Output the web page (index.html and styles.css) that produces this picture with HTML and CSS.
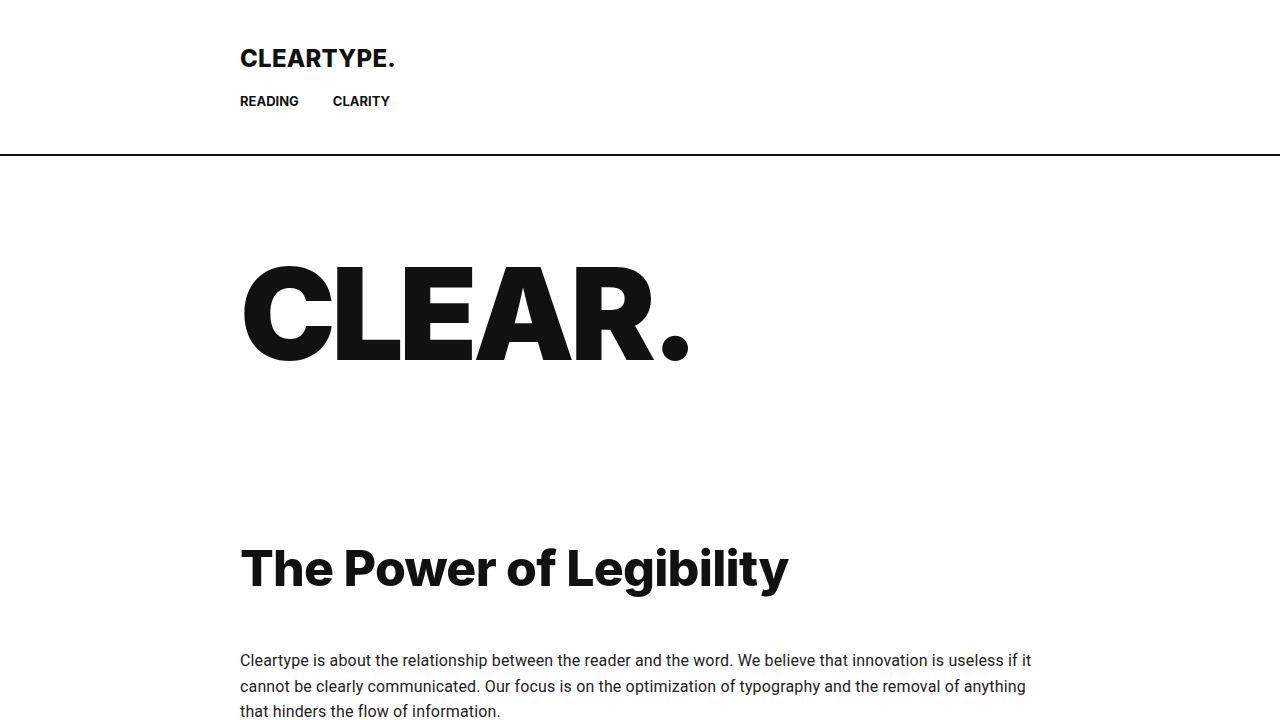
FILE: index.html
```html
<!DOCTYPE html>
<html lang="en">
<head>
<meta charset="utf-8">
<title>Cleartype</title>
<link rel="stylesheet" href="styles.css">
</head>
<body>
<header class="site-header">
  <div class="container">
    <div class="logo">CLEARTYPE.</div>
    <nav class="nav">
      <a href="#">READING</a>
      <a href="#">CLARITY</a>
    </nav>
  </div>
</header>
<main class="container">
  <section class="hero">
    <h1 class="hero-title">CLEAR.</h1>
  </section>
  <section class="intro">
    <h2 class="intro-title">The Power of Legibility</h2>
    <p class="intro-text">Cleartype is about the relationship between the reader and the word. We believe that innovation is useless if it cannot be clearly communicated. Our focus is on the optimization of typography and the removal of anything that hinders the flow of information.</p>
  </section>
</main>
</body>
</html>
```
FILE: styles.css
```css
* { box-sizing: border-box; }
html, body { margin: 0; padding: 0; }
body {
  background: #fff;
  color: #111;
  font-family: "Inter", "Liberation Sans", sans-serif;
}
.container {
  max-width: 800px;
  margin: 0 auto;
}
.site-header {
  border-bottom: 2px solid #111;
  padding: 44px 0 45px;
}
.logo {
  font-size: 24px;
  font-weight: 800;
  letter-spacing: 0.01em;
  line-height: 30px;
}
.nav {
  display: flex;
  gap: 34px;
  margin-top: 19px;
}
.nav a {
  color: #111;
  text-decoration: none;
  font-size: 13px;
  font-weight: 700;
  letter-spacing: 0;
  line-height: 16px;
}
.hero {
  padding: 94px 0 0;
}
.hero-title {
  margin: 0;
  font-size: 128px;
  font-weight: 900;
  letter-spacing: -0.035em;
  line-height: 1;
}
.intro {
  padding-top: 160px;
}
.intro-title {
  margin: 0;
  font-size: 50px;
  font-weight: 800;
  letter-spacing: -0.015em;
  line-height: 1.2;
}
.intro-text {
  margin: 50px 0 0;
  font-family: "Roboto", sans-serif;
  font-size: 16px;
  letter-spacing: 0.15px;
  line-height: 1.6;
  color: #222;
}
```
